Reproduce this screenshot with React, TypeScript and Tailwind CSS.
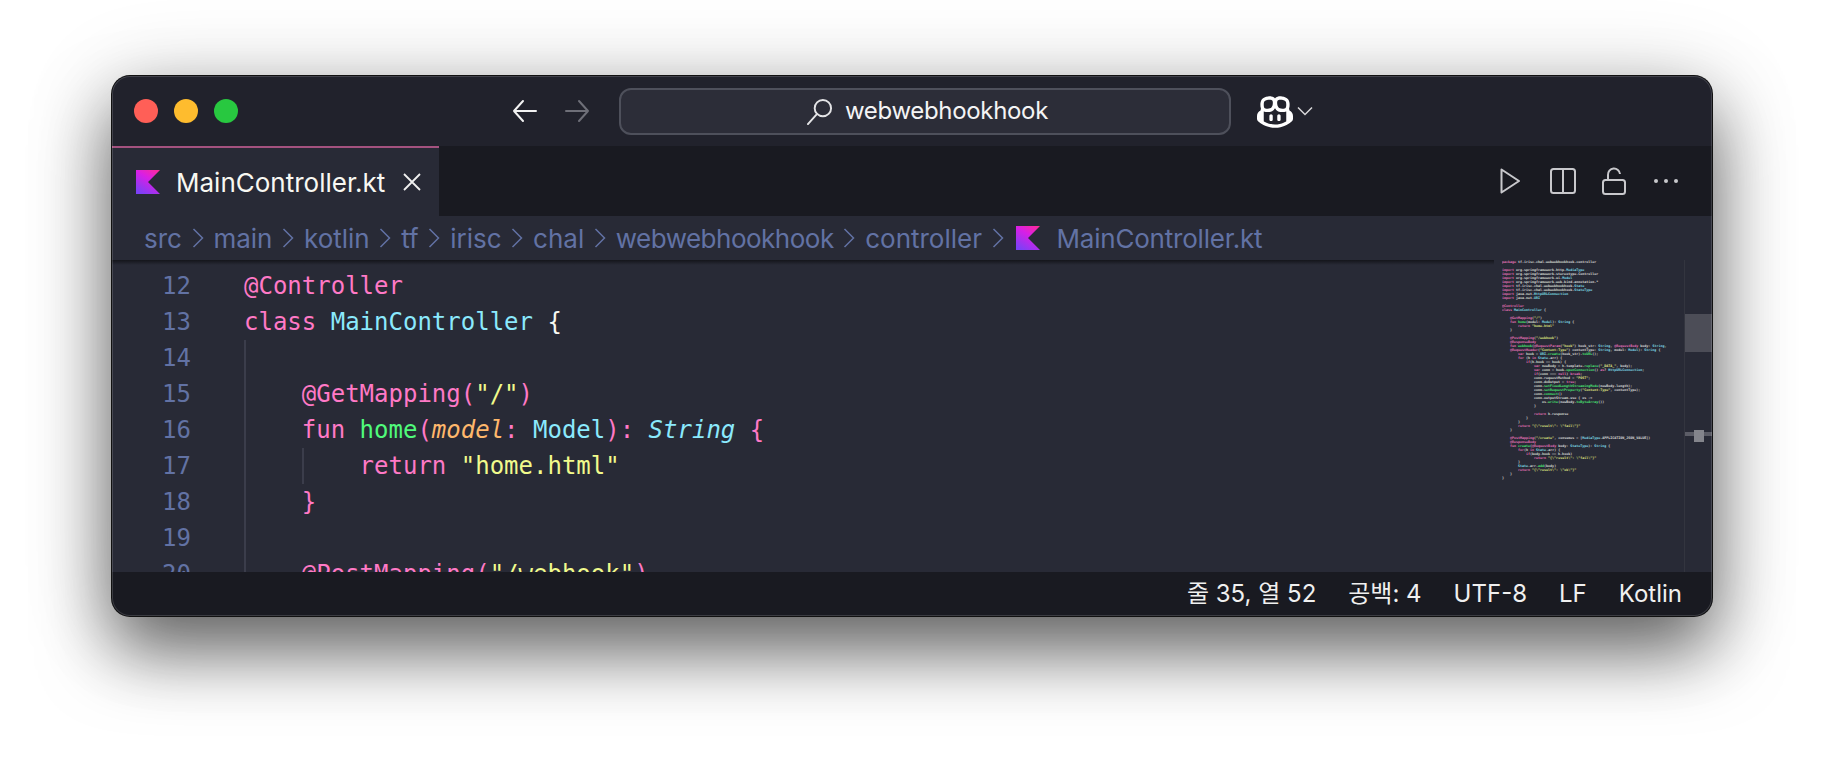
import { VscCopilot } from 'react-icons/vsc'

const COLORS = {
  pink: 'text-[#ff79c6]',
  cyan: 'text-[#8be9fd]',
  green: 'text-[#50fa7b]',
  orange: 'text-[#ffb86c]',
  yellow: 'text-[#f1fa8c]',
  white: 'text-[#f8f8f2]',
}

type Token = [string, keyof typeof COLORS, boolean?]

// visible lines of the editor
const LINES: { no: number; tokens: Token[] }[] = [
  { no: 12, tokens: [['@Controller', 'pink']] },
  {
    no: 13,
    tokens: [
      ['class ', 'pink'],
      ['MainController', 'cyan'],
      [' {', 'white'],
    ],
  },
  { no: 14, tokens: [] },
  {
    no: 15,
    tokens: [
      ['    @GetMapping(', 'pink'],
      ['"/"', 'yellow'],
      [')', 'pink'],
    ],
  },
  {
    no: 16,
    tokens: [
      ['    fun ', 'pink'],
      ['home', 'green'],
      ['(', 'pink'],
      ['model', 'orange', true],
      [': ', 'pink'],
      ['Model', 'cyan'],
      ['): ', 'pink'],
      ['String', 'cyan', true],
      [' {', 'pink'],
    ],
  },
  {
    no: 17,
    tokens: [
      ['        return ', 'pink'],
      ['"home.html"', 'yellow'],
    ],
  },
  { no: 18, tokens: [['    }', 'pink']] },
  { no: 19, tokens: [] },
  {
    no: 20,
    tokens: [
      ['    @PostMapping(', 'pink'],
      ['"/webhook"', 'yellow'],
      [')', 'pink'],
    ],
  },
]

const MINIMAP_SOURCE = `package tf.irisc.chal.webwebhookhook.controller

import org.springframework.http.MediaType
import org.springframework.stereotype.Controller
import org.springframework.ui.Model
import org.springframework.web.bind.annotation.*
import tf.irisc.chal.webwebhookhook.State
import tf.irisc.chal.webwebhookhook.StateType
import java.net.HttpURLConnection
import java.net.URI

@Controller
class MainController {

    @GetMapping("/")
    fun home(model: Model): String {
        return "home.html"
    }

    @PostMapping("/webhook")
    @ResponseBody
    fun webhook(@RequestParam("hook") hook_str: String, @RequestBody body: String,
    @RequestHeader("Content-Type") contentType: String, model: Model): String {
        var hook = URI.create(hook_str).toURL();
        for (h in State.arr) {
            if(h.hook == hook) {
                var newBody = h.template.replace("_DATA_", body);
                var conn = hook.openConnection() as? HttpURLConnection;
                if(conn === null) break;
                conn.requestMethod = "POST";
                conn.doOutput = true;
                conn.setFixedLengthStreamingMode(newBody.length);
                conn.setRequestProperty("Content-Type", contentType);
                conn.connect()
                conn.outputStream.use { os ->
                    os.write(newBody.toByteArray())
                }

                return h.response
            }
        }
        return "{\\"result\\": \\"fail\\"}"
    }

    @PostMapping("/create", consumes = [MediaType.APPLICATION_JSON_VALUE])
    @ResponseBody
    fun create(@RequestBody body: StateType): String {
        for(h in State.arr) {
            if(body.hook == h.hook)
                return "{\\"result\\": \\"fail\\"}"
        }
        State.arr.add(body)
        return "{\\"result\\": \\"ok\\"}"
    }
}`

const MINIMAP_PATTERN =
  /("(?:[^"\\]|\\.)*"|@\w+|\b(?:package|import|class|fun|var|for|if|in|return|break|as|null|true)\b|\b(?:String|Model|StateType|MainController|HttpURLConnection|URI|MediaType|State)\b|\b[a-z]\w*(?=\())/g

function minimapClass(token: string) {
  if (token.startsWith('"')) return COLORS.yellow
  if (token.startsWith('@') || /^(package|import|class|fun|var|for|if|in|return|break|as|null|true)$/.test(token)) return COLORS.pink
  if (/^[A-Z]/.test(token)) return COLORS.cyan
  return COLORS.green
}

function MinimapLine({ line }: { line: string }) {
  const parts = line.split(MINIMAP_PATTERN)
  return (
    <div className="h-[4px] whitespace-pre">
      {parts.map((part, i) =>
        i % 2 === 1 ? (
          <span key={i} className={minimapClass(part)}>
            {part}
          </span>
        ) : (
          <span key={i}>{part}</span>
        ),
      )}
    </div>
  )
}

function KotlinIcon({ id, className }: { id: string; className: string }) {
  return (
    <svg viewBox="0 0 24 24" className={className}>
      <defs>
        <linearGradient id={id} x1="0.85" y1="0" x2="0.25" y2="1">
          <stop offset="0" stopColor="#fb2a9e" />
          <stop offset="0.4" stopColor="#d81fe6" />
          <stop offset="1" stopColor="#7d40f6" />
        </linearGradient>
      </defs>
      <polygon points="0,0 24,0 12,12 24,24 0,24" fill={`url(#${id})`} />
    </svg>
  )
}

function Chevron() {
  return (
    <svg viewBox="0 0 12 24" className="mx-[9.75px] h-[24px] w-[12px] shrink-0 text-[#6272a4]" fill="none" stroke="currentColor" strokeWidth="1.5">
      <path d="M1.5 3 L10.5 12 L1.5 21" />
    </svg>
  )
}

function TrafficLights() {
  return (
    <div className="flex gap-[16px]">
      <div className="size-[24px] rounded-full bg-[#ff5f57]" />
      <div className="size-[24px] rounded-full bg-[#febc2e]" />
      <div className="size-[24px] rounded-full bg-[#28c840]" />
    </div>
  )
}

const CRUMBS = ['src', 'main', 'kotlin', 'tf', 'irisc', 'chal', 'webwebhookhook', 'controller']

export default function App() {
  return (
    <div className="h-[764px] w-[1824px] overflow-hidden bg-white pt-[76px] pl-[112px] font-['Inter','Noto_Sans_CJK_KR',sans-serif]">
      <div className="relative flex h-[540px] w-[1600px] flex-col overflow-hidden rounded-[18px] bg-[#21222c] shadow-[0_0_0_1px_#111,0_36px_70px_rgba(0,0,0,0.55),0_10px_90px_rgba(0,0,0,0.2)]">
        {/* Title bar */}
        <div className="relative flex h-[70px] shrink-0 items-center bg-[#21222c] pl-[22px]">
          <TrafficLights />
          <svg viewBox="0 0 26 24" className="ml-[274px] h-[24px] w-[26px] text-[#f2f2f2]" fill="none" stroke="currentColor" strokeWidth="2" strokeLinecap="round" strokeLinejoin="round">
            <path d="M24 12 H2 M11 2 L2 12 L11 22" />
          </svg>
          <svg viewBox="0 0 26 24" className="ml-[26px] h-[24px] w-[26px] text-[#6e6f78]" fill="none" stroke="currentColor" strokeWidth="2" strokeLinecap="round" strokeLinejoin="round">
            <path d="M2 12 H24 M15 2 L24 12 L15 22" />
          </svg>
          <div className="ml-[29px] flex h-[47px] w-[612px] items-center justify-center rounded-[12px] border-2 border-[#4e505b] bg-[#2c2d38] pl-[4px]">
            <svg viewBox="0 0 28 28" className="mr-[12px] size-[27px] text-[#e4e4e6]" fill="none" stroke="currentColor" strokeWidth="2" strokeLinecap="round">
              <circle cx="17.5" cy="10.5" r="8.5" />
              <path d="M11.5 16.5 L2 27" />
            </svg>
            <span className="text-[24px] tracking-[-0.33px] text-[#f4f4f5]">webwebhookhook</span>
          </div>
          <VscCopilot className="ml-[26px] size-[36px] text-white" />
          <svg viewBox="0 0 16 10" className="ml-[4px] h-[10px] w-[16px] text-[#d8d8da]" fill="none" stroke="currentColor" strokeWidth="1.5">
            <path d="M1 1.5 L8 8.5 L15 1.5" />
          </svg>
        </div>

        {/* Tab bar */}
        <div className="flex h-[70px] shrink-0 items-stretch bg-[#191a21]">
          <div className="flex w-[327px] items-center border-t-2 border-[#a4527f] bg-[#282a36] pl-[24px]">
            <KotlinIcon id="kt-tab" className="size-[24px]" />
            <span className="ml-[16px] text-[26px] text-[#f8f8f2]">MainController.kt</span>
            <svg viewBox="0 0 18 18" className="ml-[18px] size-[18px] text-[#f0f0f0]" fill="none" stroke="currentColor" strokeWidth="1.8">
              <path d="M1 1 L17 17 M17 1 L1 17" />
            </svg>
          </div>
          <div className="ml-auto flex items-center pr-[34px] text-[#c8c8cc]">
            <svg viewBox="0 0 20 26" className="h-[26px] w-[20px]" fill="none" stroke="currentColor" strokeWidth="2" strokeLinejoin="round">
              <path d="M1.5 1.5 L19 13 L1.5 24.5 Z" />
            </svg>
            <svg viewBox="0 0 26 26" className="ml-[30px] size-[26px]" fill="none" stroke="currentColor" strokeWidth="2">
              <rect x="1" y="1" width="24" height="24" rx="2.5" />
              <path d="M13 1 V25" />
            </svg>
            <svg viewBox="0 0 24 28" className="ml-[26px] h-[28px] w-[24px]" fill="none" stroke="currentColor" strokeWidth="2">
              <rect x="1" y="13" width="22" height="14" rx="2.5" />
              <path d="M6 13 V8 A6 6 0 0 1 18 7" />
            </svg>
            <div className="ml-[28px] flex gap-[6px]">
              <div className="size-[4px] rounded-full bg-[#c8c8cc]" />
              <div className="size-[4px] rounded-full bg-[#c8c8cc]" />
              <div className="size-[4px] rounded-full bg-[#c8c8cc]" />
            </div>
          </div>
        </div>

        {/* Breadcrumbs */}
        <div className="flex h-[44px] shrink-0 items-center bg-[#282a36] pl-[32px] text-[26px] text-[#6272a4]">
          {CRUMBS.map((crumb) => (
            <div key={crumb} className="flex items-center">
              <span className={crumb === 'webwebhookhook' ? 'tracking-[-0.5px]' : ''}>{crumb}</span>
              <Chevron />
            </div>
          ))}
          <KotlinIcon id="kt-crumb" className="ml-[3px] size-[24px]" />
          <span className="ml-[16px] tracking-[-0.2px]">MainController.kt</span>
        </div>

        {/* Editor */}
        <div className="relative flex min-h-0 flex-1 overflow-hidden bg-[#282a36]">
          <div className="min-w-0 flex-1 pt-[8px] font-['DejaVu_Sans_Mono',monospace] text-[24px] leading-[36px]">
            {LINES.map((line) => (
              <div key={line.no} className="relative flex h-[36px]">
                <div className="w-[79px] shrink-0 text-right text-[#6272a4]">{line.no}</div>
                <div className="ml-[53px] whitespace-pre">
                  {line.tokens.map(([text, color, italic], i) => (
                    <span key={i} className={`${COLORS[color]} ${italic ? 'italic' : ''}`}>
                      {text}
                    </span>
                  ))}
                </div>
                {line.no > 13 && <div className="absolute top-0 bottom-0 left-[132px] w-[2px] bg-[#3b3d4b]" />}
                {line.no === 17 && <div className="absolute top-0 bottom-0 left-[190px] w-[2px] bg-[#3b3d4b]" />}
              </div>
            ))}
          </div>

          {/* Minimap */}
          <div className="w-[190px] shrink-0 overflow-hidden pl-[8px] font-['DejaVu_Sans_Mono',monospace] text-[3.33px] leading-[4px] font-bold text-[#e8e8e2] opacity-90">
            {MINIMAP_SOURCE.split('\n').map((line, i) => (
              <MinimapLine key={i} line={line} />
            ))}
          </div>

          {/* Overview ruler */}
          <div className="relative w-[28px] shrink-0 border-l border-[#33353f]">
            <div className="absolute top-[54px] left-0 h-[38px] w-full bg-[#4c4d57]" />
            <div className="absolute top-[172px] left-0 h-[4px] w-full bg-[#5b5c66]" />
            <div className="absolute top-[170px] left-[9px] h-[12px] w-[10px] bg-[#84858c]" />
          </div>

          {/* Breadcrumb shadow */}
          <div className="absolute top-0 right-[218px] left-0 h-[5px] bg-gradient-to-b from-[#14151b] to-transparent" />
        </div>

        {/* Status bar */}
        <div className="flex h-[44px] shrink-0 items-center justify-end gap-[32px] bg-[#191a21] pr-[30px] text-[24px] text-[#f0f0f0]">
          <span>줄 35, 열 52</span>
          <span>공백: 4</span>
          <span>UTF-8</span>
          <span>LF</span>
          <span>Kotlin</span>
        </div>

        {/* Window edge highlight */}
        <div className="pointer-events-none absolute inset-0 rounded-[18px] ring-1 ring-white/15 ring-inset" />
      </div>
    </div>
  )
}
